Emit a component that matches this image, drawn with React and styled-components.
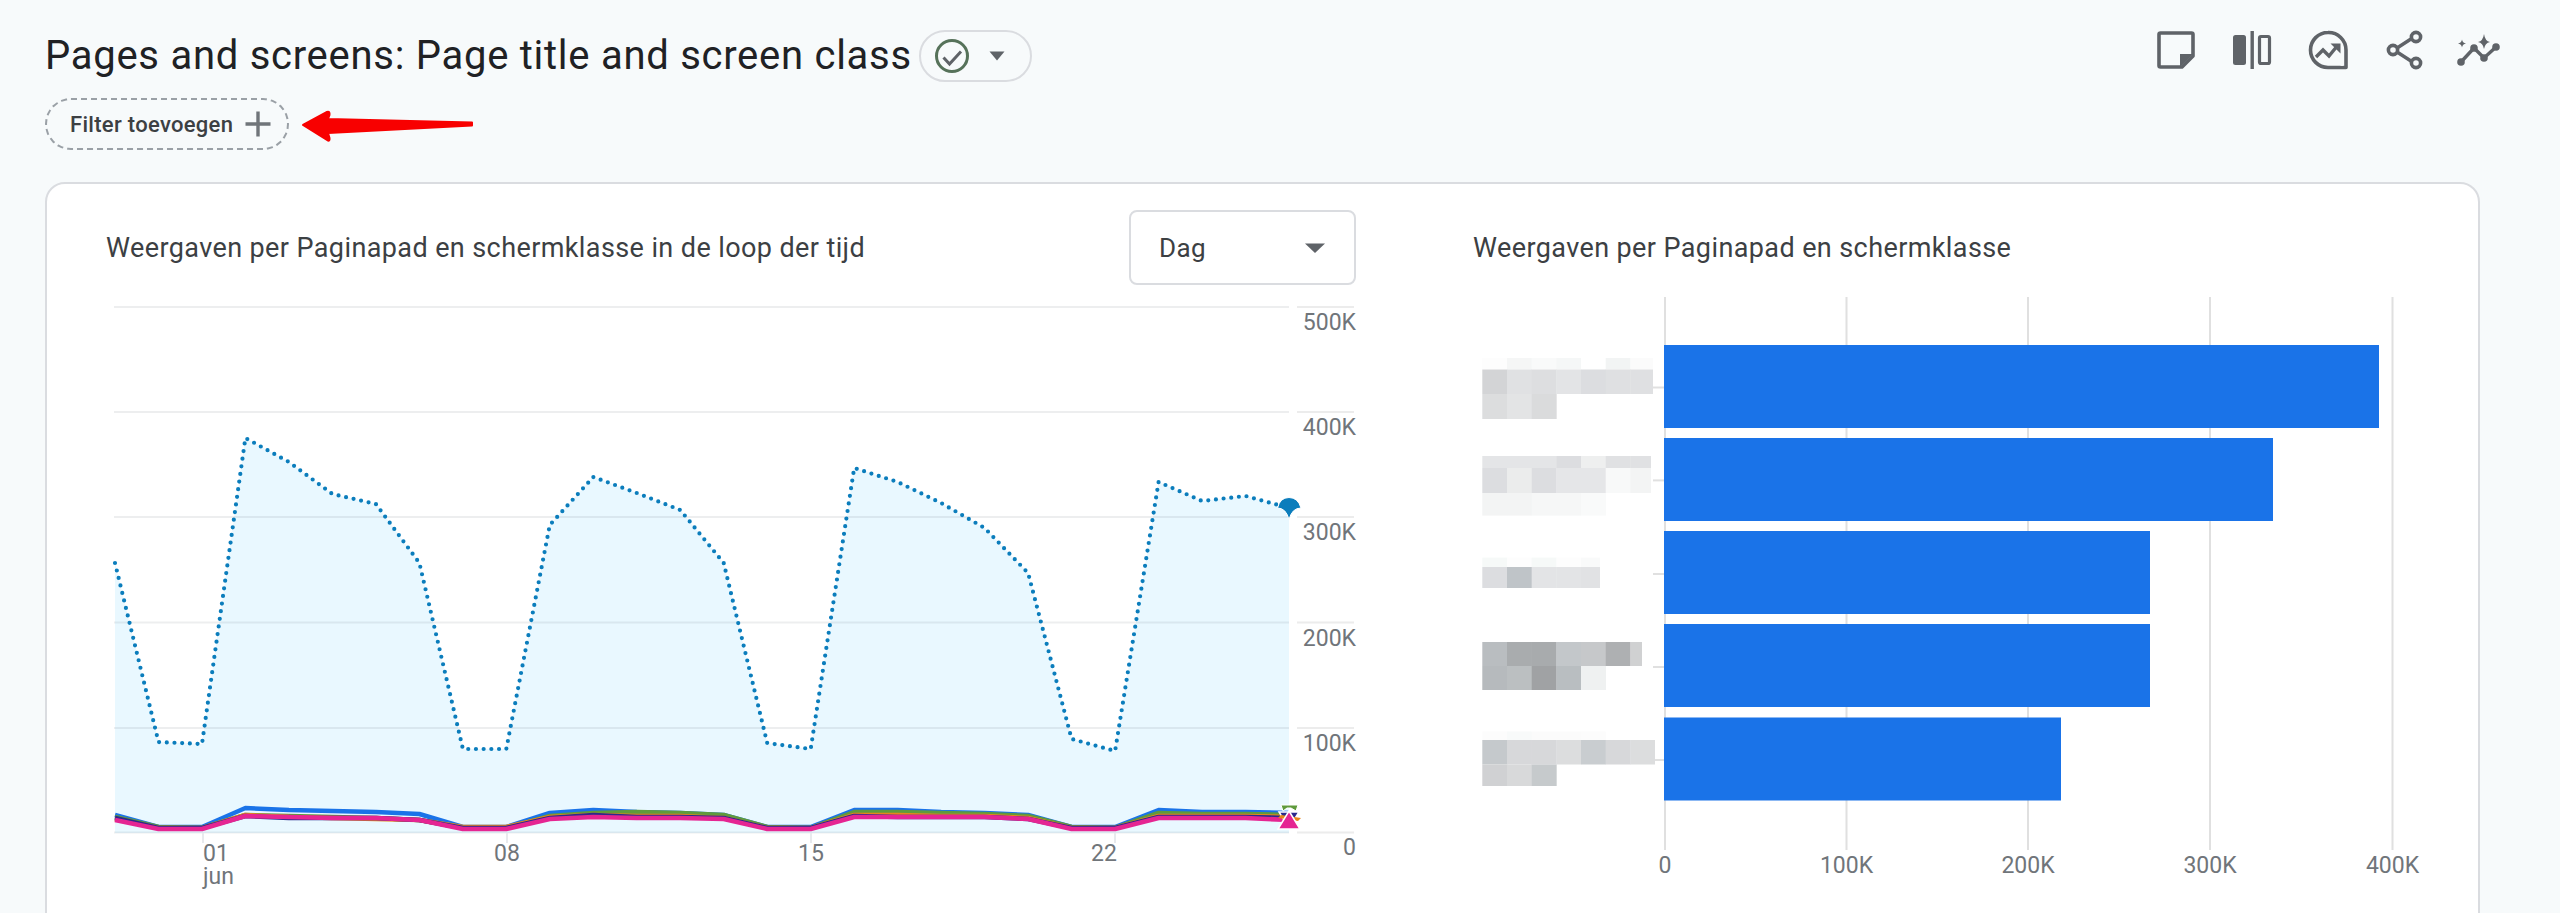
import React from "react";
import styled, { createGlobalStyle } from "styled-components";

const Global = createGlobalStyle`
  html, body { margin: 0; padding: 0; height: 100%; overflow: hidden; background: #f7fafb; }
  * { box-sizing: border-box; }
  body { font-family: "Roboto", "Liberation Sans", sans-serif; color: #202124; }
`;

const Page = styled.div`
  height: 913px;
  overflow: hidden;
  padding: 27px 57px 0 45px;
`;
const TitleRow = styled.header`
  display: flex;
  justify-content: space-between;
  align-items: flex-start;
`;
const TitleGroup = styled.div`
  display: flex;
  align-items: center;
  gap: 7px;
  margin-top: 3px;
`;
const Title = styled.h1`
  margin: 0;
  font-size: 40px;
  font-weight: 400;
  line-height: 52px;
  color: #202124;
  letter-spacing: 0.73px;
  white-space: nowrap;
`;
const StatusChip = styled.div`
  width: 113px;
  height: 52px;
  border: 2px solid #dadce0;
  border-radius: 26px;
  display: flex;
  align-items: center;
  padding-left: 13px;
  gap: 19px;
`;
const Actions = styled.div`
  display: flex;
  gap: 30px;
`;
const IconBtn = styled.svg`
  width: 46px;
  height: 46px;
  display: block;
  color: #5f6368;
`;
const FilterRow = styled.div`
  margin-top: 16px;
`;
const FilterChip = styled.div`
  position: relative;
  width: 244px;
  height: 52px;
  border-radius: 26px;
  border: 2px dashed #9aa0a6;
  display: flex;
  align-items: center;
  padding-left: 23px;
  gap: 12px;
  font-size: 22px;
  font-weight: 500;
  letter-spacing: 0.3px;
  color: #3c4043;
  white-space: nowrap;
`;
const RedArrow = styled.svg`
  position: absolute;
  left: 253px;
  top: 8px;
  width: 180px;
  height: 36px;
`;
const Card = styled.section`
  margin: 32px 23px 0 0;
  height: 800px;
  background: #fff;
  border: 2px solid #dadce0;
  border-radius: 20px;
  padding: 26px 0 0 59px;
  display: flex;
  gap: 117px;
`;
const LeftPanel = styled.div`
  width: 1250px;
`;
const RightPanel = styled.div`
  width: 1000px;
`;
const PanelHead = styled.div`
  height: 75px;
  display: flex;
  align-items: center;
  justify-content: space-between;
`;
const PanelTitle = styled.h2`
  margin: 0;
  font-size: 27px;
  font-weight: 400;
  color: #3c4043;
  letter-spacing: 0.4px;
  white-space: nowrap;
`;
const Select = styled.div`
  width: 227px;
  height: 75px;
  border: 2px solid #dadce0;
  border-radius: 8px;
  display: flex;
  align-items: center;
  justify-content: space-between;
  padding: 0 29px 0 28px;
  font-size: 26px;
  letter-spacing: 0.4px;
  color: #3c4043;
`;
const Caret = styled.svg`
  display: block;
  color: #5f6368;
`;
const Chart = styled.svg`
  display: block;
  overflow: visible;
`;
const Tick = styled.text`
  font-family: "Roboto", sans-serif;
  font-size: 23px;
  fill: #70757a;
`;

const X0 = 115, STEP = (1289 - 115) / 27;
const xs = (i) => X0 + STEP * i;
const toPts = (arr) => arr.map((y, i) => `${xs(i).toFixed(1)},${y}`).join(" ");

const main = [563, 742, 744, 438, 462, 494, 504, 563, 749, 749, 525, 477, 493, 510, 563, 743, 749, 468, 482, 503, 528, 573, 739, 751, 482, 501, 496, 508];
const lines = [
  { c: "#1a73e8", d: [815, 827, 827, 808, 810, 811, 812, 814, 827, 827, 813, 810, 812, 813, 815, 827, 827, 810, 810, 812, 813, 815, 827, 827, 810, 812, 812, 813] },
  { c: "#5f9a3c", d: [817, 827, 828, 815, 816, 817, 818, 820, 828, 828, 816, 813, 812, 813, 815, 827, 828, 812, 812, 813, 814, 816, 827, 828, 813, 814, 814, 815] },
  { c: "#e8861a", d: [819, 828, 828, 815, 817, 818, 819, 820, 827, 827, 817, 815, 816, 816, 818, 828, 828, 815, 815, 816, 816, 818, 828, 828, 816, 816, 816, 817] },
  { c: "#2a2a8c", d: [818, 828, 828, 816, 818, 818, 818, 820, 828, 828, 818, 815, 817, 817, 818, 828, 828, 816, 817, 817, 817, 819, 828, 828, 817, 817, 817, 818] },
  { c: "#e52592", d: [820, 829, 829, 816, 817, 818, 818, 820, 829, 829, 819, 817, 818, 818, 819, 829, 829, 817, 817, 817, 817, 819, 829, 829, 818, 818, 818, 820] },
];

const gridY = [307, 412, 517, 622.5, 728, 832.5];
const yLabels = [["500K", 322], ["400K", 427], ["300K", 532], ["200K", 638], ["100K", 743], ["0", 847]];

const LeftChart = () => (
  <Chart width="1250" height="610" viewBox="106 285 1250 610">
    <polygon points={`115,833 ${toPts(main)} 1289,833`} fill="#e9f8ff" />
    {gridY.map((y) => (
      <g key={y}>
        <line x1="114" x2="1289" y1={y} y2={y} stroke="#37474f" strokeOpacity="0.09" strokeWidth="2" />
        <line x1="1297" x2="1354" y1={y} y2={y} stroke="#ececec" strokeWidth="2" />
      </g>
    ))}
    {[203, 507, 811, 1115].map((x) => (
      <line key={x} x1={x} x2={x} y1="833" y2="843" stroke="#e8eaed" strokeWidth="2" />
    ))}
    <polyline points={toPts(main)} fill="none" stroke="#0b7dbc" strokeWidth="4.2" strokeLinecap="round" strokeDasharray="0 7.7" />
    {lines.map((l) => (
      <polyline key={l.c} points={toPts(l.d)} fill="none" stroke={l.c} strokeWidth="4.5" strokeLinejoin="round" />
    ))}
    <path d="M1289 519.5Q1286 508 1277.5 508Q1280 497.5 1289 497.5Q1298 497.5 1301 508Q1292 508 1289 519.5Z" fill="#0b7dbc" stroke="#fff" strokeWidth="1" />
    <polygon points="1281,805 1298,805 1296,811 1291,808 1287,808 1283,811" fill="#5f9a3c" stroke="#fff" strokeWidth="1" />
    <polygon points="1279,812 1299,812 1289,828" fill="#2a2a8c" stroke="#fff" strokeWidth="1.5" />
    <polygon points="1278,818 1281,815 1301,818 1298,821" fill="#e8861a" />
    <polygon points="1289,811 1300,829 1278,829" fill="#e52592" stroke="#fff" strokeWidth="1.5" />
    {yLabels.map(([t, y]) => (
      <Tick key={t} x="1356" y={y + 8} textAnchor="end">{t}</Tick>
    ))}
    <Tick x="203" y="861">01</Tick>
    <Tick x="203" y="884">jun</Tick>
    <Tick x="507" y="861" textAnchor="middle">08</Tick>
    <Tick x="811" y="861" textAnchor="middle">15</Tick>
    <Tick x="1104" y="861" textAnchor="middle">22</Tick>
  </Chart>
);

const cols = [1482.3, 1507, 1531.7, 1556.3, 1581, 1605.7, 1630.3];
const W = 24.67;
const blocks = [
  { end: 1653, rows: [
    [358, 369.5, ["#fdfdfd", "#f5f6f6", "#f9fafa", "#f5f7f7", "#fff", "#f2f4f4", "#fbfbfb"]],
    [369.5, 394, ["#d3d4d6", "#e0e1e3", "#dddee0", "#e3e4e6", "#dcdde0", "#dfe0e2", "#dfe0e2"]],
    [394, 419, ["#dcddde", "#e3e4e5", "#dadbdc"]],
  ] },
  { end: 1651, rows: [
    [456, 468, ["#e4e5e7", "#e4e5e7", "#e4e5e7", "#dcdde0", "#eeefef", "#e0e1e3", "#e0e1e3"]],
    [468, 493, ["#dcdde0", "#ebecec", "#dcdde0", "#e5e6e8", "#e5e6e8", "#f8f9f9", "#f3f4f4"]],
    [493, 515.6, ["#f3f4f4", "#f3f4f4", "#f6f7f7", "#f6f7f7", "#f9fafa"]],
  ] },
  { end: 1600, rows: [
    [557.6, 567, ["#f6f9f8", "#fdfdfd", "#f6f9f8", "#fdfdfd", "#f9fafa"]],
    [567, 588, ["#dcdde0", "#bfc4c8", "#e3e4e6", "#e3e4e6", "#e1e2e4"]],
  ] },
  { end: 1642, rows: [
    [642, 666, ["#b9bdc0", "#a9acae", "#a8abad", "#c3c7ca", "#c6c8ca", "#aeb0b2", "#d0d1d2"]],
    [666, 690, ["#b6babd", "#bbbfc1", "#a0a2a4", "#b9bec1", "#eff1f1"]],
  ] },
  { end: 1655, rows: [
    [731.5, 740, ["#fcfcfc", "#f8fafa", "#fbfbfb", "#fbfbfb", "#fcfcfc"]],
    [740, 764.5, ["#c5c9cc", "#d7d8da", "#d7d8da", "#dcddde", "#c9cdd0", "#d7d8da", "#dcddde"]],
    [764.5, 786, ["#d0d1d3", "#d8d9da", "#c6cacc"]],
  ] },
];
const bars = [[345, 2379], [438, 2273], [531, 2150], [624, 2150], [717.5, 2061]];
const tickY = [387.5, 480.4, 574, 667, 760];
const xTicks = [["0", 1665], ["100K", 1846.5], ["200K", 2028], ["300K", 2210], ["400K", 2392.5]];

const Mosaic = ({ block }) => (
  <g>
    {block.rows.map(([y1, y2, cells]) =>
      cells.map((c, i) => (
        <rect
          key={`${y1}-${i}`}
          x={cols[i]}
          y={y1}
          width={Math.min(W + 0.3, block.end - cols[i])}
          height={y2 - y1}
          fill={c}
        />
      ))
    )}
  </g>
);

const RightChart = () => (
  <Chart width="1000" height="610" viewBox="1473 285 1000 610">
    {xTicks.map(([t, x]) => (
      <g key={t}>
        <line x1={x} x2={x} y1="297" y2="850" stroke="#e0e0e0" strokeWidth="2" />
        <Tick x={x} y="873" textAnchor="middle">{t}</Tick>
      </g>
    ))}
    {tickY.map((y) => (
      <line key={y} x1="1653" x2="1665" y1={y} y2={y} stroke="#e0e0e0" strokeWidth="2" />
    ))}
    {bars.map(([y, x2]) => (
      <rect key={y} x="1664" y={y} width={x2 - 1664} height="83" fill="#1a73e8" />
    ))}
    {blocks.map((b) => (
      <Mosaic key={b.end} block={b} />
    ))}
  </Chart>
);

const NoteIcon = () => (
  <IconBtn viewBox="0 0 46 46">
    <path d="M7.5 6h31a1.5 1.5 0 0 1 1.5 1.5V29L29 40H7.5A1.5 1.5 0 0 1 6 38.5V7.5A1.5 1.5 0 0 1 7.5 6Z" fill="none" stroke="currentColor" strokeWidth="3.6" strokeLinejoin="round" />
    <path d="M27 40V27h13Z" fill="currentColor" />
  </IconBtn>
);
const CompareIcon = () => (
  <IconBtn viewBox="0 0 46 46">
    <rect x="4" y="8" width="13" height="30" rx="2.5" fill="currentColor" />
    <rect x="21.5" y="4" width="3.4" height="38" fill="currentColor" />
    <rect x="30.5" y="9.5" width="10" height="27" rx="1.5" fill="none" stroke="currentColor" strokeWidth="3.2" />
  </IconBtn>
);
const TrendIcon = () => (
  <IconBtn viewBox="0 0 46 46">
    <path d="M23 5.5A17.5 17.5 0 0 0 23 40.5H41V23A17.5 17.5 0 0 0 23 5.5Z" fill="none" stroke="currentColor" strokeWidth="3.6" strokeLinejoin="round" />
    <path d="M11 30l7-7 6 6 9-11" fill="none" stroke="currentColor" strokeWidth="3.4" />
    <path d="M25.5 16.5H35.5V26.5Z" fill="currentColor" />
    <circle cx="37" cy="37" r="2" fill="#f7fafb" />
  </IconBtn>
);
const ShareIcon = () => (
  <IconBtn viewBox="0 0 46 46">
    <path d="M13 23L33 10M13 23L33 36" fill="none" stroke="currentColor" strokeWidth="3.4" />
    <circle cx="35" cy="10" r="4.6" fill="#f7fafb" stroke="currentColor" strokeWidth="3.6" />
    <circle cx="12" cy="23" r="4.6" fill="#f7fafb" stroke="currentColor" strokeWidth="3.6" />
    <circle cx="35" cy="36" r="4.6" fill="#f7fafb" stroke="currentColor" strokeWidth="3.6" />
  </IconBtn>
);
const SparkIcon = () => (
  <IconBtn viewBox="0 0 46 46">
    <path d="M4 35L17 21l10 10 12-11" fill="none" stroke="currentColor" strokeWidth="3.4" />
    <circle cx="4" cy="35" r="3.8" fill="currentColor" />
    <circle cx="17" cy="21" r="3.8" fill="currentColor" />
    <circle cx="27" cy="31" r="3.8" fill="currentColor" />
    <circle cx="39" cy="20" r="3.8" fill="currentColor" />
    <path d="M27 7Q28 14 33 15Q28 16 27 22Q26 16 21 15Q26 14 27 7Z" fill="currentColor" />
    <path d="M5 12.5Q5.5 16 9 16.5Q5.5 17 5 20.5Q4.5 17 1 16.5Q4.5 16 5 12.5Z" fill="currentColor" />
  </IconBtn>
);

export default function App() {
  return (
    <>
      <Global />
      <Page>
        <TitleRow>
          <TitleGroup>
            <Title>Pages and screens: Page title and screen class</Title>
            <StatusChip>
              <svg width="36" height="36" viewBox="0 0 36 36">
                <circle cx="18" cy="18" r="15.5" fill="none" stroke="#56725a" strokeWidth="3" />
                <path d="M9.5 19.5l6 6.5L27 13.5" fill="none" stroke="#5f6368" strokeWidth="3" />
              </svg>
              <Caret width="16" height="10" viewBox="0 0 16 10">
                <path d="M0.5 0.5h15L8 9.5Z" fill="currentColor" />
              </Caret>
            </StatusChip>
          </TitleGroup>
          <Actions>
            <NoteIcon />
            <CompareIcon />
            <TrendIcon />
            <ShareIcon />
            <SparkIcon />
          </Actions>
        </TitleRow>
        <FilterRow>
          <FilterChip>
            Filter toevoegen
            <svg width="26" height="26" viewBox="0 0 26 26">
              <path d="M13 0.5v25M0.5 13h25" stroke="#70757a" strokeWidth="3.4" fill="none" />
            </svg>
            <RedArrow viewBox="0 0 180 36">
              <path d="M3 17L27 4Q30 3 29.5 7L28 11L172 14.5V17.5L28 25L29.5 30Q30 34 27 32Z" fill="#f80000" stroke="#f80000" strokeWidth="2" strokeLinejoin="round" />
            </RedArrow>
          </FilterChip>
        </FilterRow>
        <Card>
          <LeftPanel>
            <PanelHead>
              <PanelTitle>Weergaven per Paginapad en schermklasse in de loop der tijd</PanelTitle>
              <Select>
                Dag
                <Caret width="20" height="10" viewBox="0 0 20 10">
                  <path d="M0 0.5h20L10 10Z" fill="currentColor" />
                </Caret>
              </Select>
            </PanelHead>
            <LeftChart />
          </LeftPanel>
          <RightPanel>
            <PanelHead>
              <PanelTitle>Weergaven per Paginapad en schermklasse</PanelTitle>
            </PanelHead>
            <RightChart />
          </RightPanel>
        </Card>
      </Page>
    </>
  );
}
